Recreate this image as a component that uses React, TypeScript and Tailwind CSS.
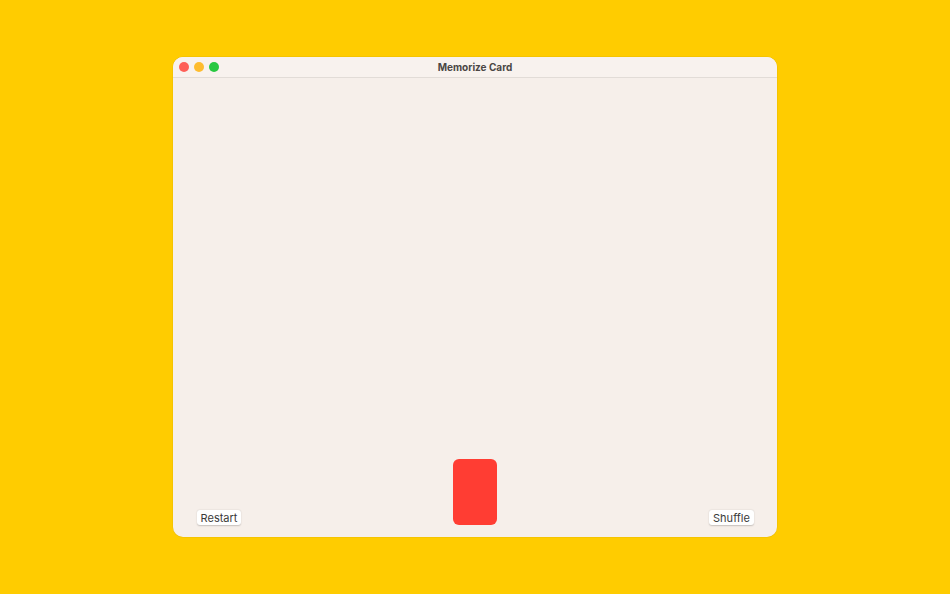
import React from "react";

export default function App() {
  return (
    <div className="w-[950px] h-[594px] bg-[#ffcc00] flex justify-center pt-[57px]" style={{ fontFamily: "Inter, 'Liberation Sans', sans-serif" }}>
      <div className="w-[604px] h-[480px] rounded-[10px] bg-[#f6efea] flex flex-col overflow-hidden shadow-[0_0_0_0.5px_rgba(0,0,0,0.08)]">
        <div className="relative h-[21px] flex items-center justify-center border-b border-[#e2dcd7] bg-[#f8f2ee]">
          <div className="absolute left-[6px] top-[5px] flex gap-[5px]">
            <span className="w-[10px] h-[10px] rounded-full bg-[#fe5f57]" />
            <span className="w-[10px] h-[10px] rounded-full bg-[#febc2e]" />
            <span className="w-[10px] h-[10px] rounded-full bg-[#28c840]" />
          </div>
          <span className="text-[10px] font-bold text-[#4a4644] leading-none">Memorize Card</span>
        </div>
        <div className="flex-1 flex items-end justify-between pl-[24px] pr-[23px] pb-[12px]">
          <button className="h-[15px] w-[44px] rounded-[3px] bg-white text-[11px] leading-none text-[#3a3a3a] shadow-[0_0.5px_1.5px_rgba(0,0,0,0.2)] flex items-center justify-center pt-[2px]">
            Restart
          </button>
          <div className="w-[44px] h-[66px] rounded-[6px] bg-[#ff3d33]" />
          <button className="h-[15px] w-[45px] rounded-[3px] bg-white text-[11px] leading-none text-[#3a3a3a] shadow-[0_0.5px_1.5px_rgba(0,0,0,0.2)] flex items-center justify-center pt-[2px]">
            Shuffle
          </button>
        </div>
      </div>
    </div>
  );
}
